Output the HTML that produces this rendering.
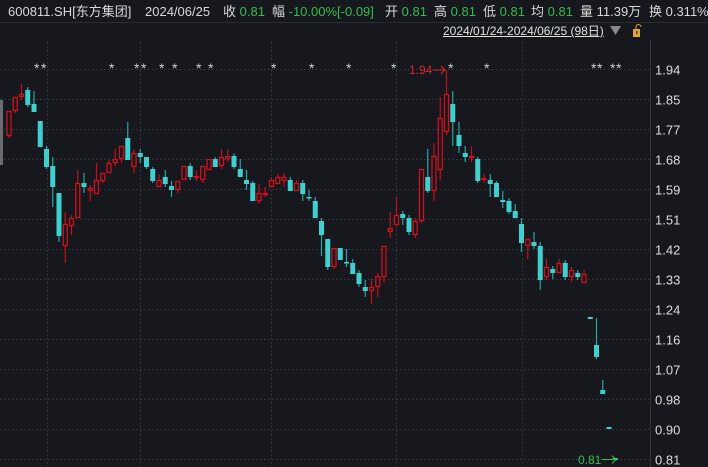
<!DOCTYPE html>
<html><head><meta charset="utf-8"><style>
html,body{margin:0;padding:0;background:#16181d;width:708px;height:467px;overflow:hidden;font-family:"Liberation Sans","Noto Sans CJK SC",sans-serif;}
.t{position:absolute;top:4px;font-size:13px;color:#d8d8d8;white-space:nowrap;line-height:16px}
.g{color:#2dbf4e}
</style></head><body>
<div style="position:absolute;left:0;top:0;width:708px;height:22px;background:#16181d;border-bottom:1px solid #2a2c31"></div>
<span class="t" style="left:8px">600811.SH[东方集团]</span>
<span class="t" style="left:145px">2024/06/25</span>
<span class="t" style="left:223px">收 <span class="g">0.81</span></span>
<span class="t" style="left:272px">幅 <span class="g">-10.00%[-0.09]</span></span>
<span class="t" style="left:385px">开 <span class="g">0.81</span></span>
<span class="t" style="left:434px">高 <span class="g">0.81</span></span>
<span class="t" style="left:483px">低 <span class="g">0.81</span></span>
<span class="t" style="left:531px">均 <span class="g">0.81</span></span>
<span class="t" style="left:580px">量 11.39万</span>
<span class="t" style="left:649px">换 0.311%</span>
<span style="position:absolute;left:443px;top:24px;font-size:12px;color:#e0e0e0;text-decoration:underline;line-height:15px">2024/01/24-2024/06/25 (98日)</span>
<svg id="s" width="708" height="467" style="position:absolute;left:0;top:0" xmlns="http://www.w3.org/2000/svg">
<polygon points="610,26 621,26 615.5,35" fill="#8a8a8a"/>
<rect x="633" y="29" width="7" height="8" fill="#e5a533"/>
<rect x="636" y="31" width="1.5" height="3" fill="#5a3a00"/>
<path d="M636 29 v-2 a2.5 2.5 0 0 1 5 0" fill="none" stroke="#e5a533" stroke-width="1"/>
<line x1="650.5" y1="40" x2="650.5" y2="467" stroke="#33353a"/>
<g id="grid" stroke="#3a3c42" stroke-dasharray="1.5,2.5" stroke-width="1"></g>
<g id="axis" font-size="13" fill="#dcdcdc" font-family="Liberation Sans,sans-serif"></g>
<g id="ast" font-size="14" fill="#cfcfcf" font-family="Liberation Sans,sans-serif"></g>
<g id="c"></g>
<text x="409" y="74" font-size="12" fill="#d8262e" font-family="Liberation Sans,sans-serif">1.94</text>
<path d="M433 70 h12 M441 66 l4 4 l-4 4" stroke="#d8262e" fill="none"/>
<text x="578" y="464" font-size="12" fill="#2dbf4e" font-family="Liberation Sans,sans-serif">0.81</text>
<path d="M602 459.5 h14 M612 455.5 l4 4 l-4 4" stroke="#2dbf4e" fill="none"/>
</svg>
<script>
var NS="http://www.w3.org/2000/svg";
function el(p,n,a){var e=document.createElementNS(NS,n);for(var k in a)e.setAttribute(k,a[k]);p.appendChild(e);return e;}
var grid=document.getElementById('grid'),axis=document.getElementById('axis');
var labs=["1.94","1.85","1.77","1.68","1.59","1.51","1.42","1.33","1.24","1.16","1.07","0.98","0.90","0.81"];
labs.forEach(function(l,i){var y=69.5+i*30;el(grid,'line',{x1:0,y1:y,x2:650,y2:y});var t=el(axis,'text',{x:655,y:y+5});t.textContent=l;});
[47,140,271,396,522].forEach(function(x){el(grid,'line',{x1:x+.5,y1:42,x2:x+.5,y2:467});});
var ast=document.getElementById('ast');
[38,45,113,138,145,163,176,200,212,275,313,350,395,452,488,595,601,614,620].forEach(function(x){var t=el(ast,'text',{x:x-4,y:73});t.textContent='*';});
var d=[[1,111,136,111,138],[1,97,111,97,113],[1,94,97,84,100],[0,90,105,87,107],[0,104,112,91,112],[0,121,147,121,147],[0,149,167,146,169],[0,166,187,157,207],[0,193,236,193,242],[1,224,246,212,263],
[1,218,226,215,235],[1,183,218,170,218],[0,183,187,173,193],[1,188,191,185,201],[1,180,194,163,194],[1,173,181,173,183],[1,163,173,160,173],[1,159,163,149,166],[1,146,159,146,163],[0,138,160,122,160],
[1,153,167,149,173],[0,153,157,149,163],[0,157,167,157,169],[0,169,181,167,183],[1,180,187,174,187],[0,177,184,170,187],[0,186,190,181,197],[1,181,190,181,193],[1,166,180,166,180],[0,166,177,163,180],
[1,176,177,170,181],[1,166,180,166,183],[1,159,170,159,170],[0,159,167,157,167],[1,157,166,149,169],[1,156,159,149,162],[0,156,167,153,169],[0,169,177,159,177],[0,180,184,170,190],[0,183,201,181,201],
[1,193,201,184,204],[1,193,194,187,197],[1,180,187,177,187],[1,177,184,174,184],[1,177,181,173,187],[0,180,191,177,191],[1,183,191,180,191],[0,183,194,180,201],[0,197,198,190,201],[0,201,218,197,218],
[0,221,235,218,256],[0,239,267,239,270],[1,248,267,248,269],[0,248,260,248,260],[0,262,263,249,267],[0,263,274,259,274],[0,273,284,270,287],[0,287,291,280,297],[1,287,291,279,304],[1,276,287,273,297],
[1,246,277,246,283],[1,228,232,212,238],[1,215,225,197,225],[0,214,218,211,225],[0,218,232,215,235],[1,221,235,218,238],[1,169,221,169,223],[0,177,191,149,193],[1,156,191,143,201],[1,118,170,97,180],
[1,94,132,70,135],[0,104,122,91,146],[0,135,146,122,153],[0,153,157,146,162],[1,156,157,146,162],[0,159,181,157,183],[1,178,179,174,183],[0,180,184,174,197],[0,183,197,181,197],[0,200,202,191,208],
[0,201,212,198,214],[0,211,218,204,218],[0,224,243,218,252],[1,239,246,239,259],[0,242,246,232,249],[0,246,280,242,290],[1,267,277,259,280],[0,269,273,266,279],[1,263,273,259,273],[0,263,277,260,280],
[1,270,277,267,282],[0,273,277,270,280],[1,274,283,270,283],[0,317,319,317,319],[0,345,357,318,359],[0,390,394,380,394],[0,427,429,427,429],[0,458,460,458,460]];
var g=document.getElementById('c');
d.forEach(function(c,i){var x=9+6.25*i,up=c[0];var col=up?'#d0101c':'#3fcfcf',wc=up?'#c0101a':'#2aa5a5';
 el(g,'line',{x1:x,y1:c[3],x2:x,y2:c[4],stroke:wc,'stroke-width':1.2});
 var h=Math.max(c[2]-c[1],1.5);
 if(up){el(g,'rect',{x:x-2,y:c[1]+.5,width:4,height:Math.max(h-1,1),fill:'#16181d',stroke:col,'stroke-width':1.3});}
 else el(g,'rect',{x:x-2.5,y:c[1],width:5,height:h,fill:col});
});
</script>
<div style="position:absolute;left:0;top:100px;width:3px;height:65px;background:#6a6c72"></div>
</body></html>
